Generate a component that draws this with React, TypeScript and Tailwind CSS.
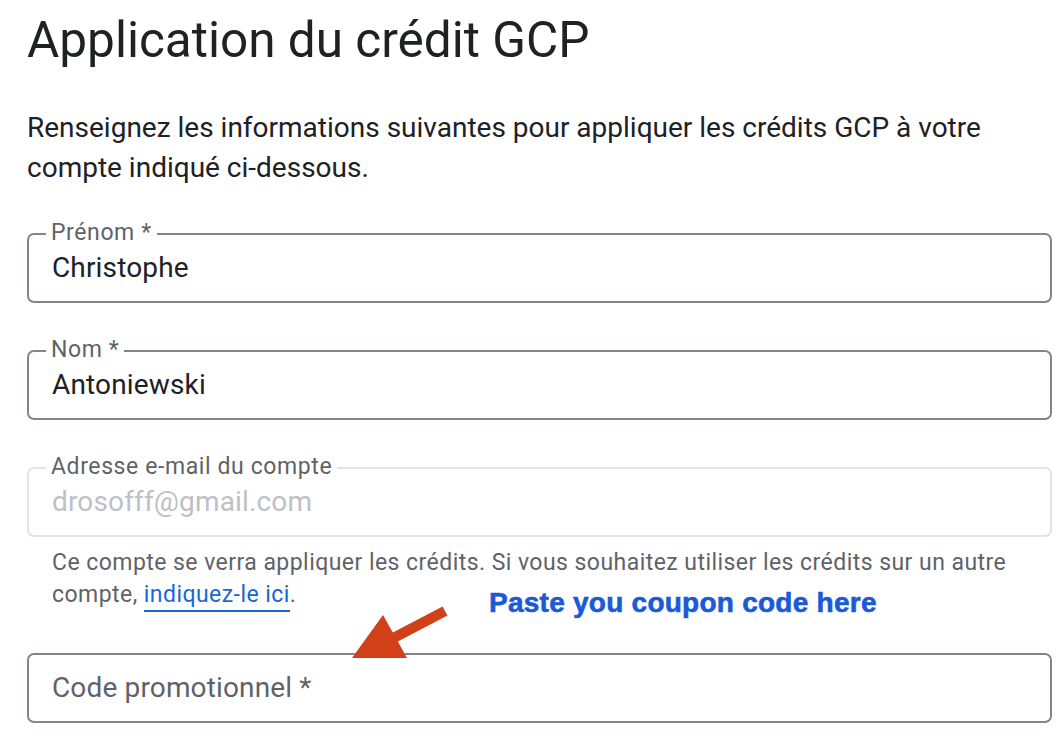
import type { ReactNode } from 'react';

function OutlinedField({
  label,
  children,
  disabled = false,
}: {
  label?: string;
  children: ReactNode;
  disabled?: boolean;
}) {
  return (
    <div
      className={`relative h-[70px] rounded-[7px] border-2 flex items-center pl-[23px] ${
        disabled ? 'border-[#e3e3e3]' : 'border-[#80868b]'
      }`}
    >
      {label && (
        <span className="absolute left-[17px] -top-[14px] bg-white px-[5px] text-[23px] leading-[24px] tracking-[0.6px] text-[#5f6368]">
          {label}
        </span>
      )}
      <span className="text-[28px] leading-[32px] tracking-[0.15px]">{children}</span>
    </div>
  );
}

export default function App() {
  return (
    <div className="relative min-h-screen bg-white pl-[27px] pr-[12px] pt-[8px] font-['Roboto','Liberation_Sans',sans-serif] text-[#202124]">
      <h1 className="text-[49.5px] leading-[64px] font-normal">Application du crédit GCP</h1>

      <p className="mt-[36px] text-[28px] leading-[40px]">
        Renseignez les informations suivantes pour appliquer les crédits GCP à votre
        <br />
        compte indiqué ci-dessous.
      </p>

      <div className="mt-[45px] flex flex-col gap-[47px]">
        <OutlinedField label="Prénom *">Christophe</OutlinedField>
        <OutlinedField label="Nom *">Antoniewski</OutlinedField>
        <div>
          <OutlinedField label="Adresse e-mail du compte" disabled>
            <span className="text-[#bdc1c6]">drosofff@gmail.com</span>
          </OutlinedField>
          <p className="mt-[10px] pl-[25px] text-[23px] leading-[32px] tracking-[0.45px] text-[#5f6368]">
            Ce compte se verra appliquer les crédits. Si vous souhaitez utiliser les crédits sur un autre
            <br />
            compte,{' '}
            <a href="#" className="text-[#1a66d8] border-b-2 border-[#1a66d8] pb-[2px]">
              indiquez-le ici
            </a>
            .
          </p>
        </div>
      </div>

      <div className="mt-[42px]">
        <OutlinedField>
          <span className="text-[#5f6368]">Code promotionnel *</span>
        </OutlinedField>
      </div>

      <div className="absolute left-[489px] top-[589px] font-['Liberation_Sans',Arial,sans-serif] text-[28px] leading-[28px] font-bold tracking-[0.25px] text-[#1a5ad7] [-webkit-text-stroke:0.6px_#1a5ad7] whitespace-nowrap">
        Paste you coupon code here
      </div>

      <svg
        className="absolute left-[340px] top-[595px]"
        width="120"
        height="70"
        viewBox="340 595 120 70"
      >
        <polygon points="442.6,606.6 447.4,615.4 395,643 390,634" fill="#d24019" />
        <polygon points="352,658 383,615 407,658" fill="#d24019" />
      </svg>
    </div>
  );
}
